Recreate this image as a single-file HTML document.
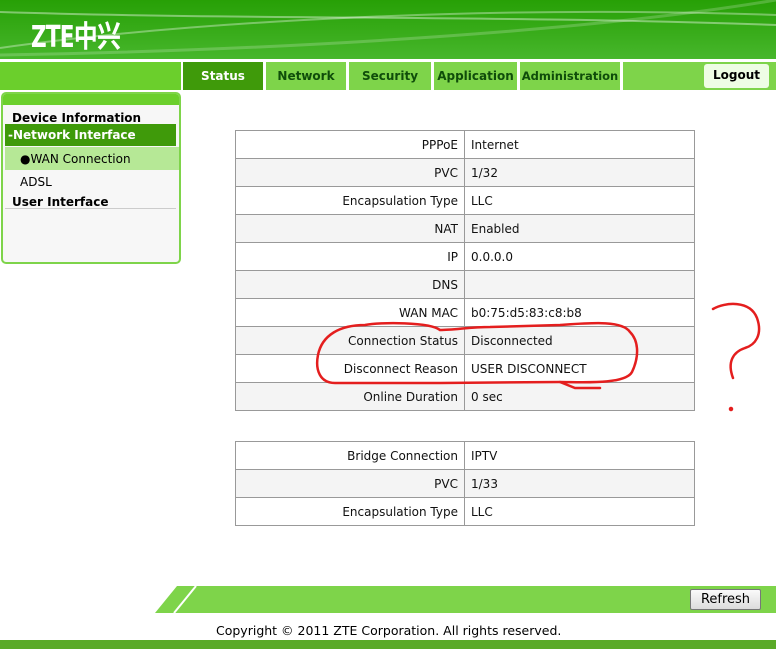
<!DOCTYPE html>
<html><head><meta charset="utf-8"><style>
*{margin:0;padding:0;box-sizing:border-box}
body{width:776px;height:649px;position:relative;background:#fff;font-family:"DejaVu Sans","Liberation Sans",sans-serif;overflow:hidden}
.hdr{position:absolute;left:0;top:0;width:776px;height:59px;background:linear-gradient(#27a006,#3aad1c 60%,#47b72c)}
.logo{position:absolute;left:31px;top:12px;color:#fff;font:bold 30px "DejaVu Sans Condensed","DejaVu Sans","Noto Sans CJK SC",sans-serif;letter-spacing:-1px;transform:scaleX(.8);transform-origin:left}
.nav{position:absolute;top:62px;height:28px;font:bold 12px "DejaVu Sans",sans-serif;color:#0f4d0a;text-align:center;line-height:29px}
.t{position:absolute;font-size:12px;color:#000}
table{position:absolute;left:235px;border-collapse:collapse;font-size:12px;color:#111}
td{border:1px solid #999;height:28px;padding:0 6px}
td.l{width:229px;text-align:right}
td.r{width:230px}
tr:nth-child(even) td{background:#f4f4f4}
</style></head><body>
<div class="hdr">
<svg width="776" height="59" style="position:absolute;left:0;top:0"><path d="M0 48 C200 20 500 5 776 15" stroke="rgba(255,255,255,.35)" stroke-width="2" fill="none"/><path d="M0 12 C250 20 500 15 776 25" stroke="rgba(255,255,255,.4)" stroke-width="2" fill="none"/><path d="M0 55 C300 50 600 30 776 0" stroke="rgba(255,255,255,.2)" stroke-width="3" fill="none"/></svg>
<div class="logo">ZTE中兴</div>
</div>
<div class="nav" style="left:0;width:181px;background:#6bcf2c"></div>
<div class="nav" style="left:183px;width:80px;background:#3f9a0a;color:#fff">Status</div>
<div class="nav" style="left:266px;width:80px;background:#7ed44a">Network</div>
<div class="nav" style="left:349px;width:82px;background:#7ed44a">Security</div>
<div class="nav" style="left:434px;width:83px;background:#7ed44a">Application</div>
<div class="nav" style="left:520px;width:100px;background:#7ed44a;font-size:11.5px">Administration</div>
<div class="nav" style="left:623px;width:153px;background:#7ed44a"></div>
<div style="position:absolute;left:704px;top:64px;width:65px;height:24px;background:#eefde4;border-radius:3px;font:bold 12px 'DejaVu Sans',sans-serif;text-align:center;line-height:23px;color:#000">Logout</div>

<div style="position:absolute;left:1px;top:92px;width:180px;height:172px;border:2px solid #7ed44a;border-radius:5px;background:#f7f7f7;overflow:hidden">
<div style="height:11px;background:#6bcf2c"></div>
<div class="t" style="left:9px;top:17px;font:bold 12px 'DejaVu Sans',sans-serif">Device Information</div>
<div style="position:absolute;left:2px;top:30px;width:171px;height:22px;background:#3f9a0a;color:#fff;font:bold 12px 'DejaVu Sans',sans-serif;line-height:22px;padding-left:3px">-Network Interface</div>
<div style="position:absolute;left:2px;top:53px;width:174px;height:23px;background:#b6e896;font:12px 'DejaVu Sans',sans-serif;line-height:25px;padding-left:15px">●WAN Connection</div>
<div class="t" style="left:17px;top:81px;font:12px 'DejaVu Sans',sans-serif">ADSL</div>
<div class="t" style="left:9px;top:101px;font:bold 12px 'DejaVu Sans',sans-serif">User Interface</div>
<div style="position:absolute;left:2px;top:114px;width:171px;height:1px;background:#ccc"></div>
</div>

<table style="top:130px">
<tr><td class="l">PPPoE</td><td class="r">Internet</td></tr>
<tr><td class="l">PVC</td><td class="r">1/32</td></tr>
<tr><td class="l">Encapsulation Type</td><td class="r">LLC</td></tr>
<tr><td class="l">NAT</td><td class="r">Enabled</td></tr>
<tr><td class="l">IP</td><td class="r">0.0.0.0</td></tr>
<tr><td class="l">DNS</td><td class="r"></td></tr>
<tr><td class="l">WAN MAC</td><td class="r">b0:75:d5:83:c8:b8</td></tr>
<tr><td class="l">Connection Status</td><td class="r">Disconnected</td></tr>
<tr><td class="l">Disconnect Reason</td><td class="r">USER DISCONNECT</td></tr>
<tr><td class="l">Online Duration</td><td class="r">0 sec</td></tr>
</table>
<table style="top:441px">
<tr><td class="l">Bridge Connection</td><td class="r">IPTV</td></tr>
<tr><td class="l">PVC</td><td class="r">1/33</td></tr>
<tr><td class="l">Encapsulation Type</td><td class="r">LLC</td></tr>
</table>

<svg width="776" height="649" style="position:absolute;left:0;top:0" fill="none" stroke="#e41e1e" stroke-width="2.5" stroke-linecap="round">
<path d="M440 330 C430 322 380 322 365 325 C340 325 322 335 318 355 C315 370 320 383 335 383 L440 383 L560 382 C580 382 625 385 632 372 C640 355 638 340 630 332 C622 320 590 323 560 325 L490 327 C470 327 455 330 440 330"/>
<path d="M560 382 L575 388 L600 388"/>
<path d="M713 309 C725 302 750 300 757 318 C763 335 755 345 745 348 C733 352 727 362 733 378"/>
<circle cx="731" cy="409" r="1" fill="#e41e1e"/>
</svg>

<div style="position:absolute;left:155px;top:586px;width:621px;height:27px;background:#7ed44a;clip-path:polygon(22px 0,100% 0,100% 100%,0 100%)"></div>
<svg width="40" height="27" style="position:absolute;left:170px;top:586px"><line x1="4" y1="27" x2="26" y2="0" stroke="#fff" stroke-width="2"/></svg>
<div style="position:absolute;left:690px;top:589px;width:71px;height:21px;border:1px solid #777;border-radius:2px;background:linear-gradient(#fafafa,#dcdcdc);font-size:13px;text-align:center;line-height:20px">Refresh</div>
<div class="t" style="left:216px;top:623px;font-size:12.5px">Copyright © 2011 ZTE Corporation. All rights reserved.</div>
<div style="position:absolute;left:0;top:640px;width:776px;height:9px;background:#5aaa28"></div>
</body></html>
